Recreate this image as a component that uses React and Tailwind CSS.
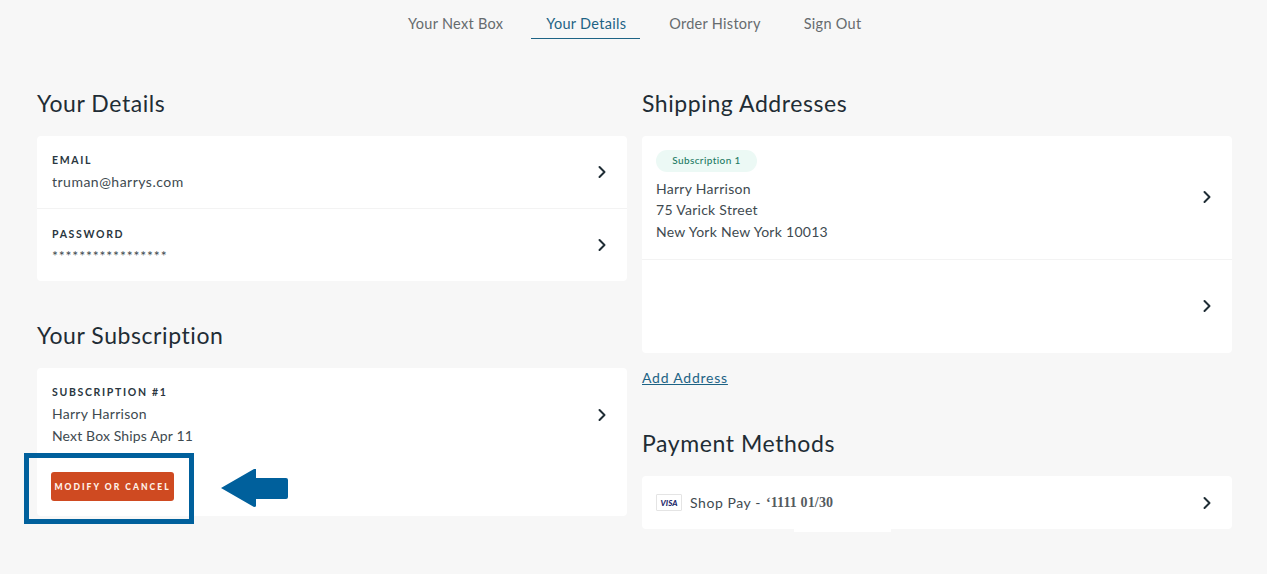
import { ChevronRight } from 'lucide-react'

const FONT = { fontFamily: 'Lato, sans-serif' }

function Chevron() {
  return <ChevronRight className="h-[20px] w-[20px] shrink-0 text-[#1f2d35]" strokeWidth={2.4} />
}

function Row({ className, children }) {
  return (
    <div className={['flex items-center justify-between pr-[15px]', className].join(' ')}>
      <div className="min-w-0">{children}</div>
      <Chevron />
    </div>
  )
}

function Label({ children }) {
  return <p className="text-[10.5px] leading-[14px] font-bold tracking-[0.16em] text-[#2a3640]">{children}</p>
}

function Value({ className, children }) {
  return <p className={['text-[14px] tracking-[0.02em] text-[#404a50]', className].join(' ')}>{children}</p>
}

function Heading({ className, children }) {
  return <h2 className={['text-[23px] leading-[32px] tracking-[0.025em] text-[#1f2d35]', className].join(' ')}>{children}</h2>
}

function Nav() {
  return (
    <nav className="flex h-[39px] justify-center text-[14.5px] tracking-[0.02em] whitespace-nowrap text-[#666b6e]">
      <div className="flex w-[481px] items-start">
        <a className="px-[15px] pt-[12.5px]">Your Next Box</a>
        <a className="ml-[13px] h-[39px] w-[109px] border-b border-[#1d6385] px-[15px] pt-[12.5px] text-[#1d6385]">Your Details</a>
        <a className="ml-[14px] px-[15px] pt-[12.5px]">Order History</a>
        <a className="ml-[13px] px-[15px] pt-[12.5px]">Sign Out</a>
      </div>
    </nav>
  )
}

export default function App() {
  return (
    <div className="relative h-[574px] w-full overflow-hidden bg-[#f7f7f7]" style={FONT}>
      <Nav />

      <div className="mt-[48px] grid grid-cols-[590px_590px] gap-x-[15px] pl-[37px]">
        <section>
          <Heading>Your Details</Heading>
          <div className="mt-[17px] divide-y divide-[#f3f3f3] rounded-[4px] bg-white">
            <Row className="h-[73px] pl-[15px]">
              <Label>EMAIL</Label>
              <Value className="mt-[4px] -mb-[2px] leading-[22px]">
                <span className="tracking-[0.035em]">truman@harrys.com</span>
              </Value>
            </Row>
            <Row className="h-[72px] pl-[15px]">
              <Label>PASSWORD</Label>
              <p className="mt-[6px] -mb-[2px] text-[14px] leading-[18px] tracking-[0.06em] text-[#404a50]">*****************</p>
            </Row>
          </div>

          <Heading className="mt-[38px]">Your Subscription</Heading>
          <div className="mt-[17px] flex h-[148px] items-start justify-between rounded-[4px] bg-white pt-[17px] pr-[15px] pl-[15px]">
            <div>
              <Label>SUBSCRIPTION #1</Label>
              <Value className="mt-[4px] leading-[22px]">Harry Harrison</Value>
              <Value className="leading-[22px]">
                <span className="tracking-[0.01em]">Next Box Ships Apr 11</span>
              </Value>
              <button className="mt-[25px] -ml-[1px] flex h-[29px] w-[123px] items-center justify-center rounded-[3px] bg-[#cf4a21] pt-[1px] text-[8.5px] font-black tracking-[0.24em] whitespace-nowrap text-[#fff3ea]">
                MODIFY OR CANCEL
              </button>
            </div>
            <div className="mt-[20px]"><Chevron /></div>
          </div>
        </section>

        <section>
          <Heading>Shipping Addresses</Heading>
          <div className="mt-[17px] divide-y divide-[#f3f3f3] rounded-[4px] bg-white">
            <Row className="h-[124px] pb-[2px] pl-[14px]">
              <span className="block h-[22px] w-[101px] rounded-full bg-[#ecf9f5] text-center text-[10px] leading-[21px] font-medium tracking-[0.04em] text-[#1d7a63]">
                Subscription 1
              </span>
              <Value className="mt-[6px] leading-[21.5px]">Harry Harrison</Value>
              <Value className="leading-[21.5px]">75 Varick Street</Value>
              <Value className="mb-[1px] leading-[21.5px]">New York New York 10013</Value>
            </Row>
            <Row className="h-[93px] pb-[2px] pl-[14px]" />
          </div>
          <a className="mt-[16px] block text-[14px] leading-[18px] tracking-[0.055em] text-[#1d6385] underline">Add Address</a>

          <Heading className="mt-[40px]">Payment Methods</Heading>
          <div className="mt-[17px] rounded-[4px] bg-white">
            <Row className="h-[53px] pl-[14px]">
              <div className="flex items-center">
                <span className="flex h-[17px] w-[26px] items-center justify-center rounded-[1px] border border-[#e4e4e4] text-[8px] font-black text-[#1f2a6b] italic">VISA</span>
                <span className="ml-[8px] text-[14px] tracking-[0.04em] text-[#404a50]">Shop Pay -</span>
                <span className="ml-[5px] text-[14px] font-bold tracking-[0.01em] text-[#555b5f]" style={{ fontFamily: 'Liberation Serif, serif' }}>‘1111 01/30</span>
              </div>
            </Row>
          </div>
        </section>
      </div>

      {/* white smudge under the payment card in the original */}
      <div className="absolute top-[529px] left-[794px] h-[3px] w-[97px] bg-white" />

      {/* annotation drawn over the page */}
      <div className="absolute top-[453px] left-[24px] h-[71px] w-[170px] border-[5px] border-[#00609c]" />
      <svg className="absolute top-[469px] left-[221px]" width="67" height="38" viewBox="0 0 67 38">
        <path d="M0 19 L33 0 H35 V9 H65 Q67 9 67 11 V28 Q67 30 65 30 H35 V37 Q35 38 33 38 Z" fill="#00609c" />
      </svg>
    </div>
  )
}
